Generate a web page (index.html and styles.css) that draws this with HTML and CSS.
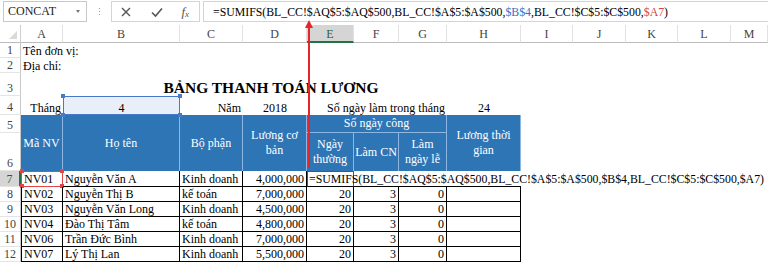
FILE: index.html
```html
<!DOCTYPE html>
<html lang="vi">
<head>
<meta charset="utf-8">
<title>Bảng thanh toán lương</title>
<link rel="stylesheet" href="styles.css">
</head>
<body>
<div class="app">
  <div class="fbar">
    <div class="namebox"><span class="nb-text">CONCAT</span><span class="dd"></span></div>
    <div class="grip"><span></span><span></span><span></span></div>
    <div class="btns">
      <svg class="ic" width="12" height="12" viewBox="0 0 12 12"><path d="M2 2 L10 10 M10 2 L2 10" stroke="#555" stroke-width="1.4" fill="none"/></svg>
      <svg class="ic" width="14" height="12" viewBox="0 0 14 12"><path d="M2 6.5 L5.5 10 L12 2.5" stroke="#555" stroke-width="1.6" fill="none"/></svg>
      <span class="fx">f<sub>x</sub></span>
    </div>
    <div class="formula"><span class="ftext">=SUMIFS(BL_CC!$AQ$5:$AQ$500,BL_CC!$A$5:$A$500,<span class="ref-b">$B$4</span>,BL_CC!$C$5:$C$500,<span class="ref-a">$A7</span>)</span></div>
  </div>

  <div class="sheet">
    <!-- column headers -->
    <div class="corner"><span class="tri"></span></div>
    <div class="ch">A</div><div class="ch">B</div><div class="ch">C</div><div class="ch">D</div>
    <div class="ch ch-sel">E</div><div class="ch">F</div><div class="ch">G</div><div class="ch">H</div>
    <div class="ch">I</div><div class="ch">J</div><div class="ch">K</div><div class="ch">L</div><div class="ch">M</div>

    <!-- row 1 -->
    <div class="rh">1</div>
    <div class="c span-all">Tên đơn vị:</div>
    <!-- row 2 -->
    <div class="rh">2</div>
    <div class="c span-all">Địa chỉ:</div>
    <!-- row 3 -->
    <div class="rh">3</div>
    <div class="c title">BẢNG THANH TOÁN LƯƠNG</div>
    <div class="c rest"></div>
    <!-- row 4 -->
    <div class="rh">4</div>
    <div class="c right">Tháng</div>
    <div class="c center ref-blue">4<i class="h tl"></i><i class="h tr"></i><i class="h bl"></i><i class="h br"></i></div>
    <div class="c right">Năm</div>
    <div class="c center">2018</div>
    <div class="c right span3">Số ngày làm trong tháng</div>
    <div class="c center">24</div>
    <div class="c rest"></div>
    <!-- row 5 -->
    <div class="rh">5</div>
    <div class="hd rows2">Mã NV</div>
    <div class="hd rows2">Họ tên</div>
    <div class="hd rows2">Bộ phận</div>
    <div class="hd rows2">Lương cơ bản</div>
    <div class="hd span3 hd-group">Số ngày công</div>
    <div class="hd rows2">Lương thời gian</div>
    <div class="c rest"></div>
    <!-- row 6 -->
    <div class="rh">6</div>
    <div class="hd">Ngày thường</div>
    <div class="hd">Làm CN</div>
    <div class="hd">Làm ngày lễ</div>
    <div class="c rest"></div>
    <!-- row 7 -->
    <div class="rh rh-sel">7</div>
    <div class="c d first ref-red">NV01<i class="h tl"></i><i class="h tr"></i><i class="h bl"></i><i class="h br"></i></div>
    <div class="c d">Nguyễn Văn A</div>
    <div class="c d">Kinh doanh</div>
    <div class="c d right">4,000,000</div>
    <div class="c active"><span class="ctext">=SUMIFS(BL_CC!$AQ$5:$AQ$500,BL_CC!$A$5:$A$500,$B$4,BL_CC!$C$5:$C$500,$A7)</span></div>
    <div class="c d nr"></div>
    <div class="c d nr"></div>
    <div class="c d nr"></div>
    <div class="c rest"></div>
    <!-- row 8 -->
    <div class="rh">8</div>
    <div class="c d first">NV02</div>
    <div class="c d">Nguyễn Thị B</div>
    <div class="c d">kế toán</div>
    <div class="c d right">7,000,000</div>
    <div class="c d right">20</div>
    <div class="c d right">3</div>
    <div class="c d right">0</div>
    <div class="c d"></div>
    <div class="c rest"></div>
    <!-- row 9 -->
    <div class="rh">9</div>
    <div class="c d first">NV03</div>
    <div class="c d">Nguyễn Văn Long</div>
    <div class="c d">Kinh doanh</div>
    <div class="c d right">4,500,000</div>
    <div class="c d right">20</div>
    <div class="c d right">3</div>
    <div class="c d right">0</div>
    <div class="c d"></div>
    <div class="c rest"></div>
    <!-- row 10 -->
    <div class="rh">10</div>
    <div class="c d first">NV04</div>
    <div class="c d">Đào Thị Tâm</div>
    <div class="c d">kế toán</div>
    <div class="c d right">4,800,000</div>
    <div class="c d right">20</div>
    <div class="c d right">3</div>
    <div class="c d right">0</div>
    <div class="c d"></div>
    <div class="c rest"></div>
    <!-- row 11 -->
    <div class="rh">11</div>
    <div class="c d first">NV06</div>
    <div class="c d">Trần Đức Bình</div>
    <div class="c d">Kinh doanh</div>
    <div class="c d right">7,000,000</div>
    <div class="c d right">20</div>
    <div class="c d right">3</div>
    <div class="c d right">0</div>
    <div class="c d"></div>
    <div class="c rest"></div>
    <!-- row 12 -->
    <div class="rh">12</div>
    <div class="c d first">NV07</div>
    <div class="c d">Lý Thị Lan</div>
    <div class="c d">Kinh doanh</div>
    <div class="c d right">5,500,000</div>
    <div class="c d right">20</div>
    <div class="c d right">3</div>
    <div class="c d right">0</div>
    <div class="c d"></div>
    <div class="c rest"></div>
  </div>

  <div class="arrow"><span class="arrow-head"></span></div>
</div>
</body>
</html>
```

FILE: styles.css
```css
* { box-sizing: border-box; }
html, body { margin: 0; padding: 0; background: #fff; }
body {
  font-family: "Liberation Serif", "DejaVu Serif", serif;
  font-size: 12px;
  color: #000;
  width: 768px;
  height: 262px;
  overflow: hidden;
}
.app { position: relative; width: 768px; height: 262px; }

/* formula bar */
.fbar {
  display: flex;
  height: 22px;
  margin-bottom: 3px;
  padding-top: 1px;
}
.namebox {
  margin-left: 3px;
  width: 84px;
  border: 1px solid #c8c8c8;
  display: flex;
  align-items: center;
  justify-content: space-between;
  padding: 0 6px 0 4px;
  font-family: "Liberation Serif", serif;
  font-size: 12px;
  color: #222;
}
.dd {
  width: 0; height: 0;
  border-left: 2.5px solid transparent;
  border-right: 2.5px solid transparent;
  border-top: 3px solid #777;
}
.grip {
  width: 24px;
  display: flex;
  flex-direction: column;
  align-items: center;
  justify-content: center;
  gap: 2px;
}
.grip span { width: 1px; height: 1px; background: #999; }
.btns {
  width: 89px;
  border: 1px solid #d4d4d4;
  display: flex;
  align-items: center;
  justify-content: space-between;
  padding: 0 10px 0 8px;
}
.fx {
  font-style: italic;
  color: #555;
  font-size: 13px;
  line-height: 1;
}
.fx sub { font-size: 9px; vertical-align: -1px; }
.formula {
  margin-left: 3px;
  flex: 1;
  border: 1px solid #d4d4d4;
  border-right: none;
  padding: 2px 0 0 9px;
  overflow: hidden;
  white-space: nowrap;
  line-height: 16px;
}
.ftext {
  font-family: "Liberation Serif", serif;
  font-size: 11.8px;
}
.ref-b { color: #3b6cc7; }
.ref-a { color: #d2463f; }

/* sheet grid */
.sheet {
  display: grid;
  grid-template-columns: 21px 42px 117px 63px 64px 47px 45px 48px 74px 52px 53px 52px 53px 1fr;
  grid-template-rows: 18px 15px 15px 23px 19px 18px 38px 16px 15px 15px 15px 15px 15px;
}
.corner {
  position: relative;
  border-right: 1px solid #d0d0d0;
  border-bottom: 1px solid #bcbcbc;
}
.tri {
  position: absolute;
  right: 3px; bottom: 3px;
  width: 0; height: 0;
  border-left: 8px solid transparent;
  border-bottom: 8px solid #dadada;
}
.ch {
  display: flex;
  align-items: center;
  justify-content: center;
  padding-top: 2px;
  color: #444;
  border-right: 1px solid #e2e2e2;
  border-bottom: 1px solid #bcbcbc;
}
.ch-sel {
  background: #d5d5d5;
  border-bottom: 2px solid #217346;
  color: #2a5f3c;
}
.rh {
  display: flex;
  align-items: flex-end;
  justify-content: center;
  color: #444;
  border-right: 1px solid #c8c8c8;
  border-bottom: 1px solid #e4e4e4;
  line-height: 14px;
}
.rh-sel {
  background: #d5d5d5;
  border-right: 2px solid #217346;
  color: #2a5f3c;
}

.c {
  display: flex;
  align-items: flex-end;
  padding: 0 2px;
  white-space: nowrap;
  line-height: 14px;
  position: relative;
}
.right { justify-content: flex-end; }
.center { justify-content: center; }
.span-all { grid-column: span 13; }
.span3 { grid-column: span 3; }
.rest { grid-column: span 5; }
.title {
  grid-column: span 8;
  justify-content: center;
  font-weight: bold;
  font-size: 15.5px;
  padding-bottom: 1px;
}

/* blue header */
.hd {
  background: #2e75b6;
  color: #fff;
  display: flex;
  align-items: center;
  justify-content: center;
  text-align: center;
  line-height: 15px;
  padding: 0 1px;
  border-right: 1px solid #8db6e2;
}
.rows2 { grid-row: span 2; }
.hd-group { border-bottom: 1px solid #8db6e2; }

/* data cells */
.d {
  border-right: 1px solid #000;
  border-bottom: 1px solid #000;
}
.first { border-left: 1px solid #000; }
.nr { border-right: none; }

.active {
  border: 1px solid #217346;
  border-bottom: 1px solid #000;
  overflow: visible;
  z-index: 2;
  padding-left: 1px;
}
.ctext {
  font-family: "Liberation Serif", serif;
  font-size: 11.8px;
}

/* formula reference highlights */
.ref-blue {
  background: #e9eff8;
  outline: 1px solid #4a78c8;
  outline-offset: -1px;
}
.ref-red {
  outline: 1px solid #e04646;
  outline-offset: -1px;
}
.h {
  position: absolute;
  width: 4px; height: 4px;
}
.ref-blue .h { background: #4a78c8; }
.ref-red .h { background: #e04646; }
.tl { left: -2px; top: -2px; }
.tr { right: -2px; top: -2px; }
.bl { left: -2px; bottom: -2px; }
.br { right: -2px; bottom: -2px; }

/* red annotation arrow */
.arrow {
  position: absolute;
  left: 308px;
  top: 27px;
  width: 2px;
  height: 141px;
  background: #e3262b;
  z-index: 5;
}
.arrow-head {
  position: absolute;
  left: -3px;
  top: -7px;
  width: 0; height: 0;
  border-left: 4px solid transparent;
  border-right: 4px solid transparent;
  border-bottom: 8px solid #e3262b;
}
```
